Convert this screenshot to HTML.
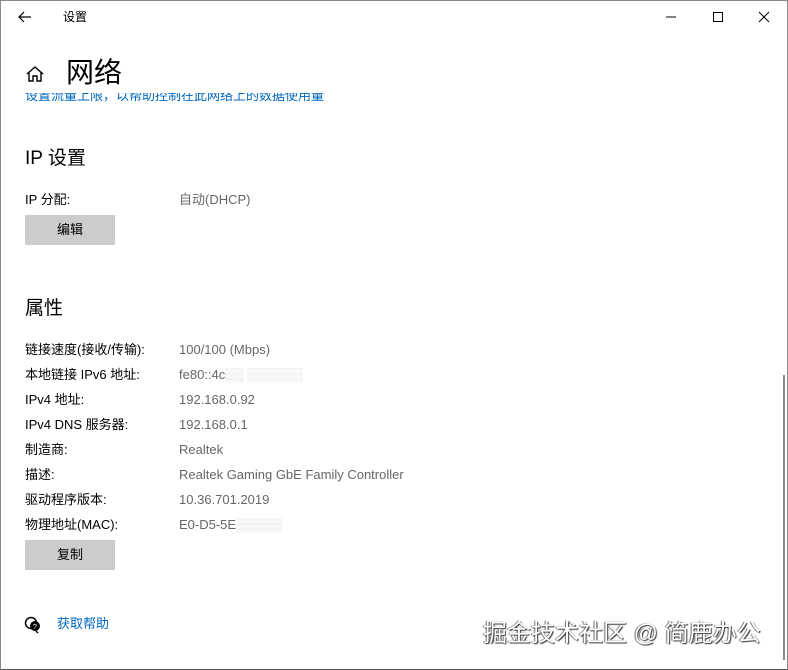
<!DOCTYPE html>
<html><head><meta charset="utf-8"><style>
body{margin:0;width:788px;height:670px;overflow:hidden;background:#fff;font-family:"Liberation Sans","Noto Sans CJK SC",sans-serif;position:relative}
.win{position:absolute;left:0;top:0;width:786px;height:668px;border:1px solid #8a8a8a;border-bottom:1px solid #555}
.t{position:absolute;white-space:nowrap}
.lbl{font-size:13px;color:#000;line-height:16px}
.val{font-size:13px;color:#666;line-height:16px}
.btn{position:absolute;left:25px;width:90px;height:30px;background:#ccc;font-size:13px;text-align:center;line-height:30px;color:#000}
</style></head><body>
<div class="win"></div>
<svg class="t" style="left:17px;top:9px" width="16" height="16" viewBox="0 0 16 16"><path d="M14 8H2M7 3L2 8l5 5" fill="none" stroke="#000" stroke-width="1.2"/></svg>
<div class="t" style="left:63px;top:9px;font-size:12px;line-height:16px">设置</div>
<svg class="t" style="left:665px;top:9px" width="110" height="16"><path d="M1 8h10" stroke="#000"/><rect x="48.5" y="3.5" width="9" height="9" fill="none" stroke="#000"/><path d="M94 3l10 10M104 3l-10 10" stroke="#000"/></svg>
<svg class="t" style="left:25px;top:65px" width="20" height="18" viewBox="0 0 20 18"><path d="M2 9L10 2l8 7M4 7.5V16h4v-5h4v5h4V7.5" fill="none" stroke="#000" stroke-width="1.4"/></svg>
<div class="t" style="left:25px;top:93px;font-size:13px;color:#0067c0;height:10px;overflow:hidden;line-height:6px">设置流量上限，以帮助控制在此网络上的数据使用量</div>
<div class="t" style="left:66px;top:54px;font-size:28px;line-height:38px;background:#fff;padding-right:4px">网络</div>
<div class="t" style="left:25px;top:147px;font-size:19px;line-height:24px">IP 设置</div>
<div class="t lbl" style="left:25px;top:192px">IP 分配:</div>
<div class="t val" style="left:179px;top:192px">自动(DHCP)</div>
<div class="btn" style="top:215px">编辑</div>
<div class="t" style="left:25px;top:297px;font-size:19px;line-height:24px">属性</div>
<div class="t lbl" style="left:25px;top:342px">链接速度(接收/传输):</div><div class="t val" style="left:179px;top:342px">100/100 (Mbps)</div>
<div class="t lbl" style="left:25px;top:367px">本地链接 IPv6 地址:</div><div class="t val" style="left:179px;top:367px">fe80::4c<span style="color:#ddd">▒▒ ▒▒▒▒▒▒</span></div>
<div class="t lbl" style="left:25px;top:392px">IPv4 地址:</div><div class="t val" style="left:179px;top:392px">192.168.0.92</div>
<div class="t lbl" style="left:25px;top:417px">IPv4 DNS 服务器:</div><div class="t val" style="left:179px;top:417px">192.168.0.1</div>
<div class="t lbl" style="left:25px;top:442px">制造商:</div><div class="t val" style="left:179px;top:442px">Realtek</div>
<div class="t lbl" style="left:25px;top:467px">描述:</div><div class="t val" style="left:179px;top:467px">Realtek Gaming GbE Family Controller</div>
<div class="t lbl" style="left:25px;top:492px">驱动程序版本:</div><div class="t val" style="left:179px;top:492px">10.36.701.2019</div>
<div class="t lbl" style="left:25px;top:517px">物理地址(MAC):</div><div class="t val" style="left:179px;top:517px">E0-D5-5E<span style="color:#ddd">▒▒▒▒▒</span></div>
<div class="btn" style="top:540px">复制</div>
<svg class="t" style="left:24px;top:616px" width="18" height="18" viewBox="0 0 18 18"><circle cx="7" cy="7" r="5.5" fill="none" stroke="#000" stroke-width="1.5"/><circle cx="11" cy="10" r="5" fill="#000"/><path d="M12 15l2 2" stroke="#000" stroke-width="1.5"/><text x="9" y="13" font-size="7" fill="#fff">?</text></svg>
<div class="t" style="left:57px;top:616px;font-size:13px;line-height:16px;color:#0067c0">获取帮助</div>
<div style="position:absolute;left:783px;top:375px;width:2px;height:285px;background:#888"></div>
<div class="t" style="left:483px;top:619px;font-size:24px;line-height:30px;color:#fff;text-shadow:1px 1px 1px #333,-1px 0 1px #666">掘金技术社区 @ 简鹿办公</div>
</body></html>
